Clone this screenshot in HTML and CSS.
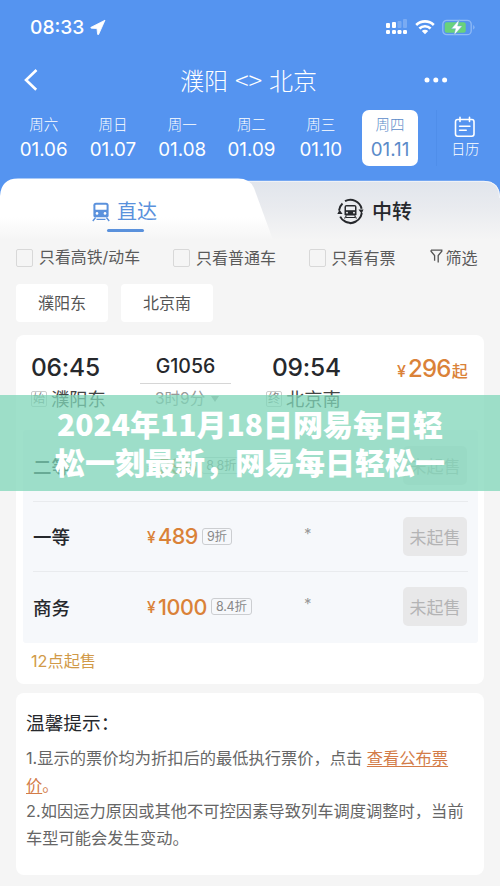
FILE: index.html
```html
<!DOCTYPE html>
<html lang="zh-CN">
<head>
<meta charset="utf-8">
<title>濮阳 - 北京</title>
<link rel="stylesheet" href="styles.css">
</head>
<body>
<div class="screen">
  <header class="header">
    <div class="status">
      <span class="clock">08:33</span>
      <svg class="locate" width="16" height="17" viewBox="0 0 16 17"><path d="M15 1.2 1 8.3q-.7.7.3.9l5.7.4.6 5.6q.4 1.2 1.1.1z" fill="#fff" stroke="#fff" stroke-width=".8" stroke-linejoin="round"/></svg>
      <svg class="signal" width="22" height="16" viewBox="0 0 22 16" fill="#fff"><rect x="0" y="4" width="4" height="5" rx="1"/><rect x="6" y="3" width="4" height="6" rx="1"/><g opacity=".22"><rect x="11.5" y="2" width="4" height="7" rx="1"/><rect x="17" y="0" width="4" height="9" rx="1"/></g><rect x="0" y="11" width="4" height="4" rx="1.2"/><rect x="6" y="11" width="4" height="4" rx="1.2"/><rect x="11.5" y="11" width="4" height="4" rx="1.2"/><rect x="17" y="11" width="4" height="4" rx="1.2"/></svg>
      <svg class="wifi" width="20" height="16" viewBox="0 0 20 16" fill="none" stroke="#fff" stroke-width="2.6"><path d="M1.2 6a12.6 12.6 0 0 1 17.6 0M4.4 9.5a8 8 0 0 1 11.2 0"/><path d="m6.8 12.1 3.2 3.2 3.2-3.2a4.6 4.6 0 0 0-6.4 0z" fill="#fff" stroke="none"/></svg>
      <svg class="battery" width="33" height="17" viewBox="0 0 33 17"><rect x=".8" y="1.3" width="28.4" height="14.4" rx="4" fill="none" stroke="#8fbaf6" stroke-width="1.3"/><rect x="2.7" y="3.2" width="21" height="10.6" rx="2" fill="#69d27b"/><path d="M31.2 6v4.6q1.3-.7 1.3-2.3T31.2 6z" fill="#8fbaf6"/><path d="m17.3.5-8 9.2h4.2l-1.5 6.6 8.2-9.3h-4.5z" fill="#fff" stroke="#69a9d6" stroke-width=".5"/></svg>
    </div>
    <div class="titlebar">
      <svg class="back" width="16" height="22" viewBox="0 0 16 22" fill="none" stroke="#fff" stroke-width="2.6"><path d="M13.5 1 3 11l10.2 9.8"/></svg>
      <h1>濮阳 <span>&lt;&gt;</span> 北京</h1>
      <svg class="more" width="24" height="6" viewBox="0 0 24 6" fill="#fff"><circle cx="3" cy="3" r="2.5"/><circle cx="11.8" cy="3" r="2.5"/><circle cx="20.6" cy="3" r="2.5"/></svg>
    </div>
    <nav class="dates">
      <div class="date"><small>周六</small><b>01.06</b></div>
      <div class="date"><small>周日</small><b>01.07</b></div>
      <div class="date"><small>周一</small><b>01.08</b></div>
      <div class="date"><small>周二</small><b>01.09</b></div>
      <div class="date"><small>周三</small><b>01.10</b></div>
      <div class="date active"><small>周四</small><b>01.11</b></div>
      <div class="calendar">
        <svg width="22" height="22" viewBox="0 0 22 22" fill="none" stroke="#fff" stroke-width="1.6" stroke-linecap="round"><rect x="1.5" y="3.5" width="18.5" height="16.8" rx="2.2"/><path d="M6 1.2v4.2M15.5 1.2v4.2M5.6 10.2h10.3M5.6 14.3h6.6"/></svg>
        <span>日历</span>
      </div>
    </nav>
  </header>

  <div class="tabs">
    <svg class="tabs-shape" width="500" height="62" viewBox="0 0 500 62">
      <defs>
        <linearGradient id="grey" x1="0" y1="0" x2="0" y2="1"><stop offset="0" stop-color="#e1e5ec"/><stop offset=".45" stop-color="#e9ebef"/><stop offset="1" stop-color="#f5f5f5"/></linearGradient>
        <linearGradient id="white" x1="0" y1="0" x2="0" y2="1"><stop offset="0" stop-color="#fff"/><stop offset=".62" stop-color="#fff"/><stop offset="1" stop-color="#f5f5f5"/></linearGradient>
      </defs>
      <path d="M220 3H484Q500 3 500 20V62H220z" fill="url(#grey)"/>
      <path d="M220 3.3H484Q499.5 3.3 499.7 20" fill="none" stroke="#f3f6fb" stroke-width="1"/>
      <path d="M0 62V18Q1 .5 18 .5H238Q250 .5 254 10L273 62z" fill="url(#white)"/>
    </svg>
    <div class="tab direct">
      <svg width="18" height="20" viewBox="0 0 18 20"><path d="M4 .8h10q2.6 0 2.6 2.5v10.4q0 1.6-1.6 1.6H3q-1.6 0-1.6-1.6V3.3Q1.4.8 4 .8z" fill="#5a91dc"/><rect x="3.4" y="2.8" width="11.2" height="5" rx=".6" fill="#fff"/><circle cx="5" cy="11.4" r="1.3" fill="#fff"/><circle cx="13" cy="11.4" r="1.3" fill="#fff"/><path d="M3.6 15.5.8 19M14.4 15.5l2.8 3.5M4.5 17.4h9" stroke="#5a91dc" stroke-width="1.4" fill="none"/></svg>
      <span>直达</span>
    </div>
    <div class="tab transfer">
      <svg width="27" height="27" viewBox="0 0 27 27"><g fill="none" stroke="#26282c" stroke-width="2"><path d="M8 3.2a11.5 11.5 0 0 1 16.6 7.5M3.2 18.6A11.5 11.5 0 0 0 24.8 15M5.5 5.5A11.5 11.5 0 0 0 2 12.5M6 22a11.5 11.5 0 0 0 13 1.6"/></g><path d="m.3 16 2.3-4.2L5.6 16zM21.5 11.5h5l-1.9 4.2z" fill="#26282c"/><path d="M9.5 7h8q2 0 2 2v7.3q0 1.2-1.2 1.2H8.7q-1.2 0-1.2-1.2V9q0-2 2-2z" fill="#26282c"/><rect x="9" y="8.5" width="9" height="3.7" fill="#eceef2"/><circle cx="10" cy="14.7" r=".9" fill="#fff"/><circle cx="17" cy="14.7" r=".9" fill="#fff"/><path d="m9.5 17.5-2 3M17.5 17.5l2 3M9 19.5h9" stroke="#26282c" stroke-width="1.1"/></svg>
      <span>中转</span>
    </div>
  </div>

  <div class="filters">
    <label class="check"><i></i><span class="wide">只看高铁/动车</span></label>
    <label class="check"><i></i><span>只看普通车</span></label>
    <label class="check"><i></i><span>只看有票</span></label>
    <div class="filter">
      <svg width="13" height="15" viewBox="0 0 13 15" fill="none" stroke="#555" stroke-width="1.3"><path d="M1 1.2h10.8v1L8.2 6.6v6.8M1 1.2v1l3.6 4.4v5.2"/></svg>
      <span>筛选</span>
    </div>
  </div>

  <div class="chips"><span>濮阳东</span><span>北京南</span></div>

  <main class="card train">
    <div class="summary">
      <div class="stop"><strong>06:45</strong><p><em>始</em>濮阳东</p></div>
      <div class="number"><b>G1056</b><hr><p>3时9分 <i></i></p></div>
      <div class="stop end"><strong>09:54</strong><p><em>终</em>北京南</p></div>
      <div class="from"><small>¥</small>296<b>起</b></div>
    </div>
    <div class="seats">
      <div class="seat"><b>二等</b><div class="price"><small>¥</small>296<em>8.8折</em></div><span>*</span><button>未起售</button></div>
      <div class="seat"><b>一等</b><div class="price"><small>¥</small>489<em>9折</em></div><span>*</span><button>未起售</button></div>
      <div class="seat"><b>商务</b><div class="price"><small>¥</small>1000<em>8.4折</em></div><span>*</span><button>未起售</button></div>
    </div>
    <div class="onsale">12点起售</div>
  </main>

  <section class="card notice">
    <h2>温馨提示：</h2>
    <p>1.显示的票价均为折扣后的最低执行票价，点击 <a>查看公布票<br>价</a><span class="stop-mark">。</span></p>
    <p>2.如因运力原因或其他不可控因素导致列车调度调整时，当前<br>车型可能会发生变动。</p>
  </section>

  <div class="banner">2024年11月18日网易每日轻<br>松一刻最新，网易每日轻松一</div>
</div>
</body>
</html>
```
FILE: styles.css
```css
* { box-sizing: border-box; }
body, h1, h2, p { margin: 0; }
body {
  background: #5594f0;
  font-family: Inter, "Noto Sans CJK SC", sans-serif;
  color: #26282c;
}
em, i { font-style: normal; }
svg { display: block; flex: none; }
.screen {
  position: relative;
  width: 500px;
  height: 886px;
  overflow: hidden;
  background: #f5f5f5;
}

.header { height: 200px; background: #5594f0; color: #fff; }
.status { display: flex; align-items: center; height: 54px; padding-left: 30px; }
.clock { width: 56px; font-size: 19.2px; font-weight: 500; line-height: 24px; white-space: nowrap; }
.locate { margin-left: 4px; }
.signal { margin-left: 280px; }
.wifi { margin-left: 7px; }
.battery { margin-left: 7px; }

.titlebar { display: flex; align-items: center; height: 52px; padding-left: 23px; }
.titlebar h1 { width: 138px; margin: -2px 0 0 141px; font-size: 24px; font-weight: 300; line-height: 36px; white-space: nowrap; word-spacing: 1.6px; font-family: "Noto Sans CJK SC", sans-serif; }
.titlebar h1 span { font-size: 25.5px; }
.more { margin-left: 106px; }

.dates { display: flex; height: 60px; padding: 4px 0 0 9px; }
.date { width: 56px; height: 56px; margin: 0 6.65px; border-radius: 7px; text-align: center; white-space: nowrap; }
.date small { display: block; height: 30px; font-size: 14.5px; line-height: 30px; font-weight: 300; }
.date b { display: block; font-size: 18.8px; line-height: 19px; font-weight: 400; }
.date.active { background: #fff; color: #5b8bc9; }
.calendar { display: flex; flex-direction: column; align-items: center; width: 58px; margin-left: 11px; padding-top: 6px; border-left: 1px solid #4f8eea; font-size: 14px; line-height: 22px; font-weight: 300; }

.tabs { position: relative; display: flex; height: 62px; margin-top: -22px; padding-top: 13px; }
.tabs-shape { position: absolute; left: 0; top: 0; }
.tab { position: relative; display: flex; align-items: center; height: 41px; font-size: 20px; line-height: 40px; font-weight: 500; }
.direct { width: 66px; margin-left: 92px; gap: 7px; color: #5a91dc; font-weight: 400; }
.direct::after { content: ""; position: absolute; left: 15px; top: 38px; width: 37px; height: 3px; border-radius: 2px; background: #5a91dc; }
.transfer { margin-left: 179px; gap: 8px; }

.filters { display: flex; align-items: center; height: 36px; padding-left: 16px; color: #5a5a5a; font-size: 16px; line-height: 24px; white-space: nowrap; }
.check { display: flex; align-items: center; gap: 6px; }
.check i { width: 17px; height: 18px; margin-top: -1px; border: 1.5px solid #d8d8d8; border-radius: 2px; }
.check:nth-child(1) { width: 157px; }
.check:nth-child(2) { width: 135.5px; }
.check:nth-child(3) { width: 121px; }
.wide { font-size: 15.9px; }
.filter { display: flex; align-items: center; gap: 3px; }
.filter svg { margin-top: -3px; }

.chips { display: flex; gap: 13px; margin-top: 8px; padding-left: 16px; }
.chips span { width: 92px; height: 38px; border-radius: 4px; background: #fff; color: #555; font-size: 16px; line-height: 38px; text-align: center; }

.card { width: 468px; margin-left: 16px; border-radius: 8px; background: #fff; }
.train { height: 349px; margin-top: 13px; padding-top: 17px; }
.summary { display: flex; height: 78px; padding-left: 15px; white-space: nowrap; }
.stop { width: 109px; }
.stop strong { display: block; font-size: 24.5px; line-height: 30px; font-weight: 500; letter-spacing: -.2px; }
.stop p { display: flex; align-items: center; gap: 4px; height: 34px; color: #444; font-size: 18.3px; line-height: 34px; }
.stop em { width: 16px; height: 16px; border: 1px solid #ccc; border-radius: 2px; color: #888; font-size: 12px; line-height: 14px; text-align: center; }
.number { width: 91px; text-align: center; }
.number b { display: block; font-size: 19.5px; font-weight: 500; line-height: 29px; }
.number hr { height: 1px; margin: 2px 0 0; border: 0; background: #d6d6d6; }
.number p { display: flex; align-items: center; gap: 6px; padding-left: 15px; color: #999; font-size: 15.5px; line-height: 29px; }
.number i { border: 4.5px solid transparent; border-top: 6px solid #aaa; border-bottom: 0; }
.end { margin-left: 41px; width: 96px; }
.end em { margin-left: -6px; }
.from { display: flex; align-items: baseline; margin-left: 29px; color: #da8238; font-size: 24px; line-height: 34px; font-weight: 500; letter-spacing: -.8px; }
.from small { width: 11px; font-size: 16px; }
.from b { margin-left: 1px; font-size: 16px; font-weight: 500; }
.seats { height: 213px; margin: 0 6px 0 7px; padding: 0 10px; border-radius: 3px; background: #f6f8fb; }
.seat { display: flex; align-items: center; height: 70.5px; border-top: 1px solid #e9ebee; }
.seat:first-child { border-color: transparent; }
.seat b { width: 114px; font-size: 18.5px; font-weight: 500; }
.price { display: flex; align-items: center; width: 157px; color: #da8238; font-size: 21.5px; font-weight: 500; line-height: 28px; letter-spacing: -.4px; }
.price small { width: 11px; margin-top: 3px; font-size: 15.5px; }
.price em { height: 17px; margin-left: 4px; padding: 0 4px; border: 1px solid #ccced1; border-radius: 3px; color: #888; font-size: 12.5px; font-weight: 400; line-height: 15px; letter-spacing: -.2px; white-space: nowrap; }
.seat span { width: 99px; margin-top: -6px; color: #999; font-size: 15px; }
.seat button { width: 64px; height: 39px; padding: 0; border: 0; border-radius: 5px; background: #e8e8e9; color: #b4b4b5; font: 17px/39px "Noto Sans CJK SC", sans-serif; white-space: nowrap; }
.onsale { padding: 4px 15px; color: #d19a48; font-size: 16.2px; line-height: 28px; }

.notice { height: 182px; margin-top: 9px; padding: 15px 10px 0; }
.notice h2 { height: 37px; font-size: 18.7px; line-height: 32px; font-weight: 400; }
.notice p { color: #666; font-size: 16.25px; line-height: 26.5px; white-space: nowrap; }
.notice p:last-child { letter-spacing: .02px; }
.notice a, .stop-mark { color: #d37c48; }
.notice a { text-decoration: underline; text-underline-offset: 2px; }

.banner { position: absolute; left: 0; top: 395px; width: 500px; height: 96px; padding-top: 9px; background: rgba(127, 213, 184, .75); color: #fff; font: 900 30px/38px "Noto Sans CJK SC", sans-serif; text-align: center; white-space: nowrap; }
```
